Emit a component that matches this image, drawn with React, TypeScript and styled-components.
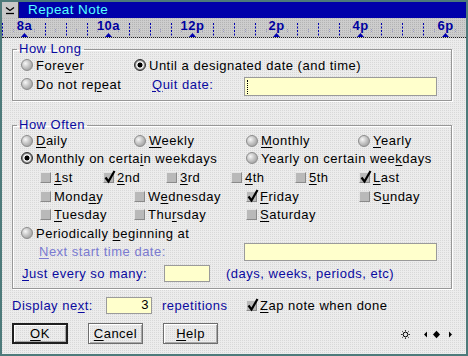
import React from "react";
import styled, { createGlobalStyle } from "styled-components";

const Global = createGlobalStyle`
  html, body { margin: 0; padding: 0; background: #ffffff; }
  * { box-sizing: border-box; }
`;

const BLUE = "#0a0aa0";

const Window = styled.div`
  width: 468px;
  height: 356px;
  border: 2px solid #4d7a7a;
  display: flex;
  flex-direction: column;
  font-family: "Liberation Sans", Arial, sans-serif;
  font-size: 13px;
  letter-spacing: 0.5px;
  color: #000;
  overflow: hidden;
`;

const TitleBar = styled.div`
  height: 16px;
  flex: none;
  display: flex;
  align-items: center;
  background: #0000aa;
`;

const SysButton = styled.div`
  width: 17px;
  height: 16px;
  background: #c8c8c8;
  border-right: 1px solid #404040;
  display: flex;
  align-items: center;
  justify-content: center;
`;

const Title = styled.span`
  color: #55ffff;
  margin-left: 9px;
  font-size: 13.5px;
  letter-spacing: 0.4px;
  line-height: 16px;
`;

const RulerBox = styled.div`
  height: 20px;
  flex: none;
  background-color: #cdcdcd;
  background-image: conic-gradient(at 1px 1px, transparent 75%, #b4b4b4 0);
  background-size: 2px 2px;
  border-bottom: 1px dotted #202020;
`;

const Body = styled.div`
  flex: 1;
  display: flex;
  flex-direction: column;
  padding: 4px 14px 0 10px;
  background-color: #ececec;
  background-image: conic-gradient(at 1px 1px, transparent 75%, #d8d8d8 0);
  background-size: 2px 2px;
`;

const Group = styled.fieldset<{ $mt: number; $pb: number }>`
  margin: ${(p) => p.$mt}px 0 0 0;
  padding: 0 8px ${(p) => p.$pb}px 8px;
  min-width: 0;
  border: 1px solid #979797;
  box-shadow: 1px 1px 0 #ffffff, inset 1px 1px 0 #ffffff;
`;

const Legend = styled.legend`
  padding: 0 2px;
  margin-left: -4px;
  line-height: 14px;
  color: ${BLUE};
  background: transparent;
`;

const Row = styled.div<{ $h: number; $indent?: number; $top?: boolean; $mt?: number }>`
  display: flex;
  align-items: ${(p) => (p.$top ? "flex-start" : "center")};
  height: ${(p) => p.$h}px;
  margin-top: ${(p) => p.$mt ?? 0}px;
  padding-left: ${(p) => p.$indent ?? 0}px;
`;

const Cell = styled.div<{ $w?: number; $pl?: number }>`
  flex: none;
  width: ${(p) => (p.$w ? `${p.$w}px` : "auto")};
  padding-left: ${(p) => p.$pl ?? 0}px;
  display: flex;
  align-items: center;
  height: 20px;
  white-space: nowrap;
`;

const U = styled.span`
  text-decoration: underline;
  text-underline-offset: 2px;
`;

const BlueText = styled.span<{ $disabled?: boolean }>`
  color: ${(p) => (p.$disabled ? "#7a7ad0" : BLUE)};
  white-space: nowrap;
`;

const Choice = styled.span`
  display: inline-flex;
  align-items: center;
  white-space: nowrap;
`;

const RadioDot = styled.span<{ $on?: boolean }>`
  flex: none;
  width: 12px;
  height: 12px;
  border-radius: 50%;
  margin-right: 3px;
  border: 1px solid ${(p) => (p.$on ? "#303030" : "#8c8c8c")};
  background: ${(p) =>
    p.$on
      ? "radial-gradient(circle, #000 0 2.2px, #f2f2f2 2.8px 3.4px, #8a8a8a 4.5px)"
      : "radial-gradient(circle at 35% 35%, #f6f6f6 0, #c4c4c4 45%, #8e8e8e 100%)"};
`;

const Box = styled.span`
  flex: none;
  position: relative;
  width: 11px;
  height: 11px;
  margin-right: 3px;
  background: #b9b9b9;
  border: 1px solid;
  border-color: #e4e4e4 #8a8a8a #8a8a8a #e4e4e4;
`;

const Tick = styled.svg`
  position: absolute;
  left: 0px;
  top: -3px;
  overflow: visible;
`;

const Field = styled.div<{ $w: number; $h: number; $mt?: number; $right?: boolean }>`
  flex: none;
  width: ${(p) => p.$w}px;
  height: ${(p) => p.$h}px;
  margin-top: ${(p) => p.$mt ?? 0}px;
  background: #ffffcc;
  border: 1px solid #9a9a9a;
  display: flex;
  align-items: center;
  justify-content: ${(p) => (p.$right ? "flex-end" : "flex-start")};
  padding: 0 2px;
  line-height: 14px;
`;

const Caret = styled.span`
  width: 1px;
  height: 14px;
  border-left: 1px dotted #000;
`;

const ButtonRow = styled.div`
  display: flex;
  align-items: center;
  margin-top: 8px;
  height: 21px;
  gap: 20px;
`;

const Button = styled.div<{ $def?: boolean; $w: number }>`
  width: ${(p) => p.$w}px;
  height: 21px;
  display: flex;
  align-items: center;
  justify-content: center;
  border: ${(p) => (p.$def ? "2px solid #202020" : "1px solid #6e6e6e")};
  box-shadow: inset 1px 1px 0 #ffffff, inset -1px -1px 0 #a8a8a8;
  background: transparent;
`;

const Tools = styled.div`
  margin-left: auto;
  margin-right: -4px;
  display: flex;
  align-items: center;
  gap: 8px;
  padding-top: 2px;
`;

function Radio({ on, children }: { on?: boolean; children: React.ReactNode }) {
  return (
    <Choice>
      <RadioDot $on={on} />
      <span>{children}</span>
    </Choice>
  );
}

function Check({ on, children }: { on?: boolean; children: React.ReactNode }) {
  return (
    <Choice>
      <Box>
        {on && (
          <Tick width="12" height="13" viewBox="0 0 12 13">
            <path d="M1.5 7.5 L4.5 11.5 L10.5 1" fill="none" stroke="#000" strokeWidth="2.2" />
          </Tick>
        )}
      </Box>
      <span>{children}</span>
    </Choice>
  );
}

function Ruler() {
  const hours = ["8a", "10a", "12p", "2p", "4p", "6p"];
  const step = 84.2;
  const start = 21.5;
  const ticks: number[] = [];
  for (let k = -1; k < 24; k++) {
    if (k % 4 !== 0) ticks.push(start + (step / 4) * k);
  }
  const marks: number[] = [];
  for (let k = -1; k < 23; k++) marks.push(start + (step / 4) * k + step / 8);
  return (
    <svg width="464" height="20" viewBox="0 0 464 20" style={{ display: "block" }}>
      {ticks.map((x) => (
        <line key={"t" + x} x1={Math.round(x) + 0.5} x2={Math.round(x) + 0.5} y1={5} y2={18} stroke="#0000b0" strokeWidth={1} strokeDasharray="2 1.5" />
      ))}
      {marks.map((x) => (
        <line key={"m" + x} x1={Math.round(x) + 0.5} x2={Math.round(x) + 0.5} y1={11} y2={15} stroke="#9898c0" strokeWidth={1} strokeDasharray="1 1" />
      ))}
      {hours.map((h, i) => {
        const x = Math.round(start + step * i);
        return (
          <g key={h}>
            <text x={x + 0.5} y={12} textAnchor="middle" fontFamily="Liberation Sans, Arial, sans-serif" fontWeight="bold" fontSize="13" fill="#0000a0">
              {h}
            </text>
            <path d={`M${x - 3} 19 L${x + 0.5} 15 L${x + 4} 19 Z`} fill="#0000b0" />
          </g>
        );
      })}
    </svg>
  );
}

export default function App() {
  return (
    <>
      <Global />
      <Window>
        <TitleBar>
          <SysButton>
            <svg width="10" height="9" viewBox="0 0 10 9">
              <path d="M1 1.5 L5 4.5 L9 1.5" fill="none" stroke="#000" strokeWidth="1.3" />
              <path d="M1 7.5 H9" stroke="#000" strokeWidth="1.3" />
            </svg>
          </SysButton>
          <Title>Repeat Note</Title>
        </TitleBar>
        <RulerBox>
          <Ruler />
        </RulerBox>
        <Body>
          <Group $mt={0} $pb={3}>
            <Legend>How Long</Legend>
            <Row $h={18}>
              <Cell $w={113}>
                <Radio>
                  Fore<U>v</U>er
                </Radio>
              </Cell>
              <Cell>
                <Radio on>Until a designated date (and time)</Radio>
              </Cell>
            </Row>
            <Row $h={23} $top>
              <Cell $w={113}>
                <Radio>
                  Do not re<U>p</U>eat
                </Radio>
              </Cell>
              <Cell $w={110} $pl={18}>
                <BlueText>
                  <U>Q</U>uit date:
                </BlueText>
              </Cell>
              <Field $w={193} $h={19} $mt={3}>
                <Caret />
              </Field>
            </Row>
          </Group>

          <Group $mt={17} $pb={2}>
            <Legend>How Often</Legend>
            <Row $h={17}>
              <Cell $w={113}>
                <Radio>
                  <U>D</U>aily
                </Radio>
              </Cell>
              <Cell $w={112}>
                <Radio>
                  <U>W</U>eekly
                </Radio>
              </Cell>
              <Cell $w={112}>
                <Radio>
                  <U>M</U>onthly
                </Radio>
              </Cell>
              <Cell>
                <Radio>
                  <U>Y</U>early
                </Radio>
              </Cell>
            </Row>
            <Row $h={18}>
              <Cell $w={225}>
                <Radio on>
                  Monthly on certa<U>i</U>n weekdays
                </Radio>
              </Cell>
              <Cell>
                <Radio>
                  Yearly on certain wee<U>k</U>days
                </Radio>
              </Cell>
            </Row>
            <Row $h={20} $indent={19}>
              <Cell $w={63}>
                <Check>
                  <U>1</U>st
                </Check>
              </Cell>
              <Cell $w={63}>
                <Check on>
                  <U>2</U>nd
                </Check>
              </Cell>
              <Cell $w={65}>
                <Check>
                  <U>3</U>rd
                </Check>
              </Cell>
              <Cell $w={64}>
                <Check>
                  <U>4</U>th
                </Check>
              </Cell>
              <Cell $w={64}>
                <Check>
                  <U>5</U>th
                </Check>
              </Cell>
              <Cell>
                <Check on>
                  <U>L</U>ast
                </Check>
              </Cell>
            </Row>
            <Row $h={18} $indent={19}>
              <Cell $w={94}>
                <Check>
                  Mond<U>a</U>y
                </Check>
              </Cell>
              <Cell $w={112}>
                <Check>
                  W<U>e</U>dnesday
                </Check>
              </Cell>
              <Cell $w={113}>
                <Check on>
                  <U>F</U>riday
                </Check>
              </Cell>
              <Cell>
                <Check>
                  S<U>u</U>nday
                </Check>
              </Cell>
            </Row>
            <Row $h={19} $indent={19}>
              <Cell $w={94}>
                <Check>
                  <U>T</U>uesday
                </Check>
              </Cell>
              <Cell $w={112}>
                <Check>
                  Thu<U>r</U>sday
                </Check>
              </Cell>
              <Cell>
                <Check>
                  <U>S</U>aturday
                </Check>
              </Cell>
            </Row>
            <Row $h={18}>
              <Cell>
                <Radio>
                  Periodically <U>b</U>eginning at
                </Radio>
              </Cell>
            </Row>
            <Row $h={19} $indent={18}>
              <Cell $w={205}>
                <BlueText $disabled>
                  <U>N</U>ext start time date:
                </BlueText>
              </Cell>
              <Field $w={193} $h={18} />
            </Row>
            <Row $h={25} $indent={1}>
              <Cell $w={142}>
                <BlueText>
                  <U>J</U>ust every so many:
                </BlueText>
              </Cell>
              <Field $w={46} $h={17} />
              <Cell $pl={16}>
                <BlueText>(days, weeks, periods, etc)</BlueText>
              </Cell>
            </Row>
          </Group>

          <Row $h={20} $mt={6}>
            <Cell $w={94}>
              <BlueText>
                Display ne<U>x</U>t:
              </BlueText>
            </Cell>
            <Field $w={46} $h={17} $right>
              3
            </Field>
            <Cell $w={94} $pl={10}>
              <BlueText>repetitions</BlueText>
            </Cell>
            <Cell>
              <Check on>
                <U>Z</U>ap note when done
              </Check>
            </Cell>
          </Row>

          <ButtonRow>
            <Button $def $w={56}>
              <U>O</U>K
            </Button>
            <Button $w={55}>
              <U>C</U>ancel
            </Button>
            <Button $w={55}>
              <U>H</U>elp
            </Button>
            <Tools>
              <svg width="9" height="9" viewBox="0 0 9 9">
                <circle cx="4.5" cy="4.5" r="2.3" fill="none" stroke="#000" strokeWidth="1" />
                <path d="M4.5 0 V1.5 M4.5 7.5 V9 M0 4.5 H1.5 M7.5 4.5 H9 M1.3 1.3 L2.3 2.3 M6.7 6.7 L7.7 7.7 M7.7 1.3 L6.7 2.3 M1.3 7.7 L2.3 6.7" stroke="#000" strokeWidth="0.8" />
              </svg>
              <svg width="34" height="9" viewBox="0 0 34 9" style={{ marginLeft: 4 }}>
                <path d="M2 4.5 L5 1.5 V7.5 Z" fill="#000" />
                <path d="M14.5 0.8 L18 4.5 L14.5 8.2 L11 4.5 Z" fill="#000" />
                <path d="M30 4.5 L27 1.5 V7.5 Z" fill="#000" />
              </svg>
            </Tools>
          </ButtonRow>
        </Body>
      </Window>
    </>
  );
}
